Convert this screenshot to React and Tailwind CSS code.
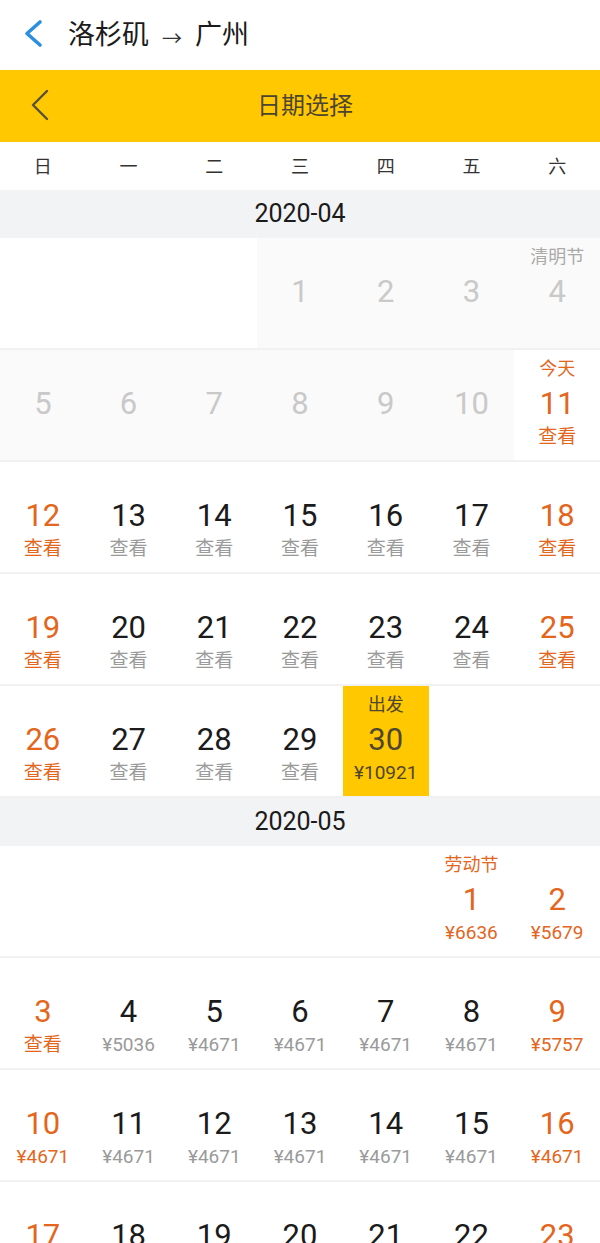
import React from "react";

const FONT = { fontFamily: 'Roboto, "Noto Sans CJK SC", sans-serif' };
const ORANGE = "text-[#e4661d]";

function Cell({ d }) {
  if (!d) return <div className="h-[110px] bg-white" />;
  const { n, label, sub, past, orange, today, selected, labelOrange, subOrange } = d;
  let bg = "bg-white";
  if (past) bg = "bg-[#fafafa]";
  if (selected) bg = "bg-[#ffc800]";
  let numColor = "text-[#1b1b1b]";
  if (past) numColor = "text-[#c9c9c9]";
  else if (selected) numColor = "text-[#4f4630]";
  else if (orange || today) numColor = ORANGE;
  let labelColor = "text-[#aaaaaa]";
  if (labelOrange || today) labelColor = ORANGE;
  if (selected) labelColor = "text-[#4f4630]";
  let subColor = "text-[#9a9a9a]";
  if (subOrange || orange || today) subColor = ORANGE;
  if (selected) subColor = "text-[#4f4630]";
  return (
    <div className={`h-[110px] flex flex-col items-center pt-[2px] ${bg}`}>
      <div className={`h-[34px] leading-[34px] text-[18px] ${labelColor}`}>
        {label || ""}
      </div>
      <div className={`h-[36px] leading-[36px] text-[31px] ${numColor}`}>{n}</div>
      <div className={`h-[30px] leading-[30px] text-[19px] ${subColor}`}>
        {sub || ""}
      </div>
    </div>
  );
}

function Month({ title, weeks }) {
  return (
    <div>
      <div className="h-[48px] bg-[#f2f3f5] flex items-center justify-center text-[25px] text-[#1b1b1b]">
        {title}
      </div>
      {weeks.map((w, i) => (
        <div key={i} className="grid grid-cols-7 border-b-2 border-[#f1f1f1]">
          {w.map((d, j) => (
            <Cell key={j} d={d} />
          ))}
        </div>
      ))}
    </div>
  );
}

function buildApril() {
  const days = [];
  for (let i = 1; i <= 30; i++) {
    const col = (i + 2) % 7;
    const weekend = col === 0 || col === 6;
    let d = { n: i };
    if (i <= 10) {
      d.past = true;
      if (i === 4) d.label = "清明节";
    } else if (i === 11) {
      d = { n: 11, today: true, label: "今天", sub: "查看" };
    } else if (i === 30) {
      d = { n: 30, selected: true, label: "出发", sub: "¥10921" };
    } else {
      d.sub = "查看";
      d.orange = weekend;
    }
    days.push(d);
  }
  const cells = [null, null, null, ...days];
  while (cells.length % 7) cells.push(null);
  const weeks = [];
  for (let i = 0; i < cells.length; i += 7) weeks.push(cells.slice(i, i + 7));
  return weeks;
}

function buildMay() {
  const prices = { 1: "¥6636", 2: "¥5679", 3: "查看", 4: "¥5036", 9: "¥5757" };
  const days = [];
  for (let i = 1; i <= 23; i++) {
    const col = (i + 4) % 7;
    const weekend = col === 0 || col === 6;
    const d = { n: i, sub: prices[i] || "¥4671" };
    if (i === 1) {
      d.label = "劳动节";
      d.labelOrange = true;
    }
    if (weekend || i === 1) d.orange = true;
    days.push(d);
  }
  const cells = [null, null, null, null, null, ...days];
  while (cells.length % 7) cells.push(null);
  const weeks = [];
  for (let i = 0; i < cells.length; i += 7) weeks.push(cells.slice(i, i + 7));
  return weeks;
}

export default function App() {
  const weekdays = ["日", "一", "二", "三", "四", "五", "六"];
  return (
    <div className="w-[600px] h-[1243px] overflow-hidden bg-white" style={FONT}>
      <div className="h-[70px] flex items-center bg-white">
        <svg width="60" height="70" viewBox="0 0 60 70" className="shrink-0">
          <polyline
            points="40,22 27,33.5 40,45"
            fill="none"
            stroke="#2b8fe0"
            strokeWidth="3.6"
            strokeLinecap="round"
            strokeLinejoin="round"
          />
        </svg>
        <div className="ml-[8px] flex items-center text-[27px] text-[#1b1b1b] leading-none">
          <span>洛杉矶</span>
          <span className="mx-[13px] text-[20px] text-[#333] relative top-[4px]">→</span>
          <span>广州</span>
        </div>
      </div>
      <div className="h-[72px] bg-[#ffc800] relative flex items-center justify-center">
        <svg width="60" height="72" viewBox="0 0 60 72" className="absolute left-0 top-0">
          <polyline
            points="47,21 33,35 47,49"
            fill="none"
            stroke="#55503f"
            strokeWidth="2.4"
            strokeLinecap="round"
            strokeLinejoin="round"
          />
        </svg>
        <span className="text-[24px] text-[#4a4430] ml-[10px]">日期选择</span>
      </div>
      <div className="h-[48px] grid grid-cols-7 items-center bg-white">
        {weekdays.map((w) => (
          <div key={w} className="text-center text-[18px] text-[#333]">
            {w}
          </div>
        ))}
      </div>
      <Month title="2020-04" weeks={buildApril()} />
      <Month title="2020-05" weeks={buildMay()} />
    </div>
  );
}
